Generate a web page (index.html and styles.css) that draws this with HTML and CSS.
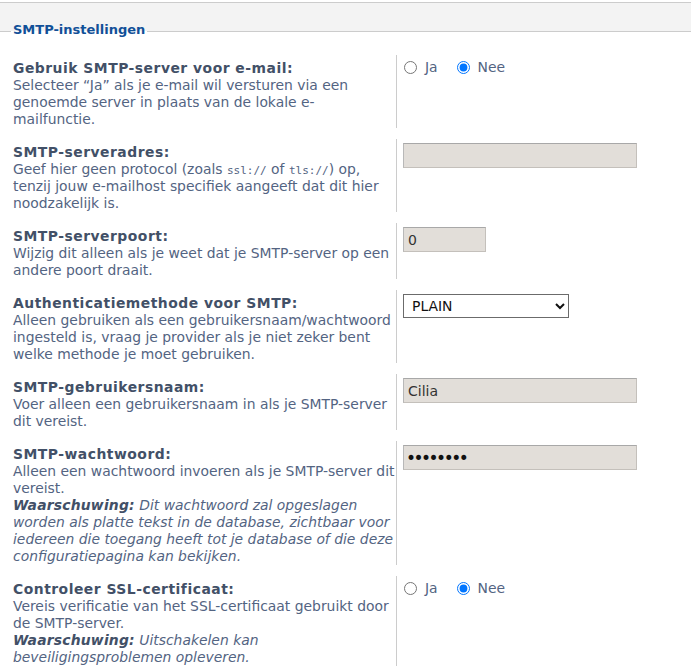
FILE: index.html
```html
<!DOCTYPE html>
<html lang="nl">
<head>
<meta charset="utf-8">
<title>SMTP-instellingen</title>
<link rel="stylesheet" href="styles.css">
</head>
<body>
<div class="panel">
  <fieldset class="set">
    <legend>SMTP-instellingen</legend>
    <div class="rows">
      <div class="row">
        <div class="dt">
          <div class="label">Gebruik SMTP-server voor e-mail:</div>
          <div class="desc">Selecteer “Ja” als je e-mail wil versturen via een genoemde server in plaats van de lokale e-mailfunctie.</div>
        </div>
        <div class="dd">
          <div class="radios">
            <label class="opt"><input type="radio" name="smtp"> Ja</label>
            <label class="opt"><input type="radio" name="smtp" checked> Nee</label>
          </div>
        </div>
      </div>
      <div class="row">
        <div class="dt">
          <div class="label">SMTP-serveradres:</div>
          <div class="desc">Geef hier geen protocol (zoals <code>ssl://</code> of <code>tls://</code>) op, tenzij jouw e-mailhost specifiek aangeeft dat dit hier noodzakelijk is.</div>
        </div>
        <div class="dd"><input class="text" type="text" value=""></div>
      </div>
      <div class="row">
        <div class="dt">
          <div class="label">SMTP-serverpoort:</div>
          <div class="desc">Wijzig dit alleen als je weet dat je SMTP-server op een andere poort draait.</div>
        </div>
        <div class="dd"><input class="text port" type="text" value="0"></div>
      </div>
      <div class="row">
        <div class="dt">
          <div class="label">Authenticatiemethode voor SMTP:</div>
          <div class="desc">Alleen gebruiken als een gebruikersnaam/wachtwoord ingesteld is, vraag je provider als je niet zeker bent welke methode je moet gebruiken.</div>
        </div>
        <div class="dd">
          <select class="sel">
            <option selected>PLAIN</option>
            <option>LOGIN</option>
            <option>CRAM-MD5</option>
          </select>
        </div>
      </div>
      <div class="row">
        <div class="dt">
          <div class="label">SMTP-gebruikersnaam:</div>
          <div class="desc">Voer alleen een gebruikersnaam in als je SMTP-server dit vereist.</div>
        </div>
        <div class="dd"><input class="text" type="text" value="Cilia"></div>
      </div>
      <div class="row">
        <div class="dt">
          <div class="label">SMTP-wachtwoord:</div>
          <div class="desc">Alleen een wachtwoord invoeren als je SMTP-server dit vereist.<br><em class="warn"><strong>Waarschuwing:</strong> Dit wachtwoord zal opgeslagen worden als platte tekst in de database, zichtbaar voor iedereen die toegang heeft tot je database of die deze configuratiepagina kan bekijken.</em></div>
        </div>
        <div class="dd"><input class="text pw" type="password" value="geheim12"></div>
      </div>
      <div class="row">
        <div class="dt">
          <div class="label">Controleer SSL-certificaat:</div>
          <div class="desc">Vereis verificatie van het SSL-certificaat gebruikt door de SMTP-server.<br><em class="warn"><strong>Waarschuwing:</strong> Uitschakelen kan beveiligingsproblemen opleveren.</em></div>
        </div>
        <div class="dd">
          <div class="radios">
            <label class="opt"><input type="radio" name="ssl"> Ja</label>
            <label class="opt"><input type="radio" name="ssl" checked> Nee</label>
          </div>
        </div>
      </div>
    </div>
  </fieldset>
</div>
</body>
</html>
```
FILE: styles.css
```css
body {
  margin: 0;
  background: #ffffff;
  font-family: "DejaVu Sans", Verdana, sans-serif;
  font-size: 13.9px;
  color: #536482;
}

.panel {
  margin-top: 2px;
  border-top: 1px solid #cccccc;
  background: #f3f3f3;
  padding-top: 18px;
}

.set {
  margin: 0;
  padding: 0 0 20px;
  border: 0;
  border-top: 1px solid #cccccc;
  background: #ffffff;
  min-width: 0;
}

.set legend {
  margin-left: 11px;
  padding: 0 2px 3px;
  font-weight: bold;
  font-size: 13px;
  line-height: 17px;
  color: #115098;
}

.rows {
  padding-top: 14px;
  display: flex;
  flex-direction: column;
  gap: 11px;
}

.row {
  display: flex;
}

.dt {
  width: 383px;
  flex: none;
  padding: 5px 0 0 13px;
  line-height: 17px;
}

.label {
  font-weight: bold;
  letter-spacing: 0.5px;
  color: #425067;
}

.desc {
  line-height: 17px;
}

.desc code {
  font-family: "DejaVu Sans Mono", "Liberation Mono", monospace;
  font-size: 11px;
  line-height: 1;
}

.warn {
  font-style: italic;
  line-height: 17px;
}

.warn strong {
  font-weight: bold;
  letter-spacing: 0.2px;
  color: #425067;
}

.dd {
  flex: 1;
  border-left: 1px solid #cccccc;
  padding: 4px 0 0 6px;
}

.radios {
  display: flex;
  align-items: center;
  height: 17px;
  padding-left: 1px;
  gap: 19px;
}

.opt {
  display: flex;
  align-items: center;
  gap: 4px;
  color: #536482;
  line-height: 17px;
}

.opt input {
  margin: 0 4px 0 0;
  width: 13px;
  height: 13px;
}

.text {
  box-sizing: border-box;
  width: 234px;
  height: 25px;
  margin: 0;
  padding: 0 4px;
  border: 1px solid #c4c0bb;
  border-top-color: #a8a8a8;
  border-left-color: #b8b8b8;
  background: #e2ded9;
  font-family: "DejaVu Sans", Verdana, sans-serif;
  font-size: 14px;
  color: #333333;
}

.port {
  width: 83px;
}

.pw {
  padding-left: 2px;
  font-size: 17px;
  letter-spacing: -2.5px;
  color: #111111;
}

.sel {
  box-sizing: border-box;
  width: 166px;
  height: 24px;
  margin: 0;
  padding: 0 0 0 4px;
  border: 1px solid #6b6b6b;
  border-radius: 0;
  background: #ffffff;
  font-family: "DejaVu Sans", Verdana, sans-serif;
  font-size: 13.9px;
  color: #111111;
}
```
